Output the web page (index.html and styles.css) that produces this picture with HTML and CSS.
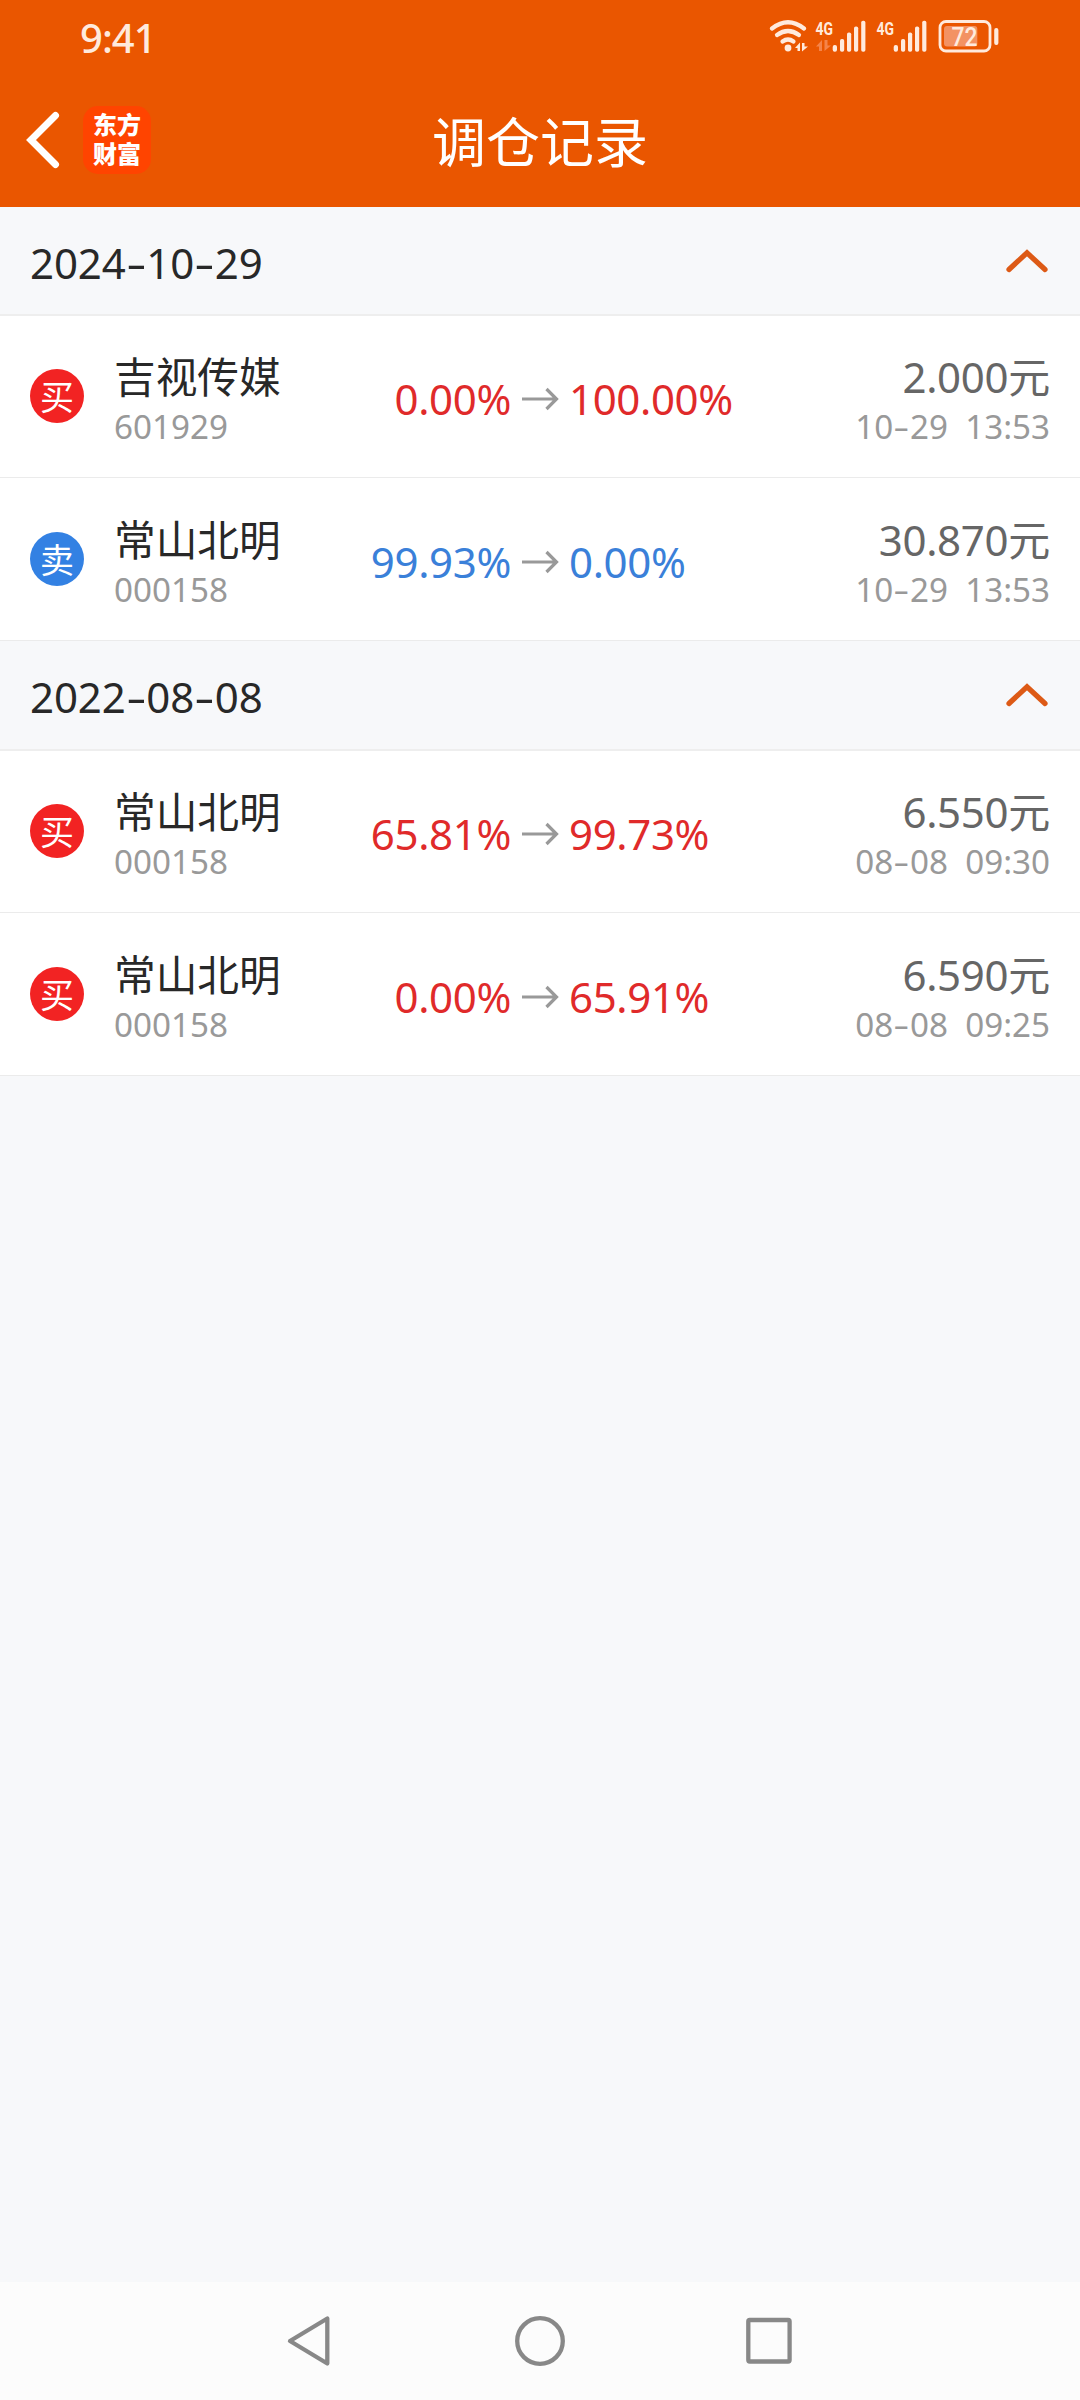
FILE: index.html
```html
<!DOCTYPE html>
<html lang="zh-CN">
<head>
<meta charset="utf-8">
<title>调仓记录</title>
<link rel="stylesheet" href="styles.css">
</head>
<body>
<svg class="defs" width="0" height="0" aria-hidden="true">
  <symbol id="arrow" viewBox="0 0 38 24"><path d="M1 12H35M25.500 2L35.500 12L25.500 22" fill="none" stroke="#999" stroke-width="3.200"/></symbol>
  <symbol id="chevron" viewBox="0 0 42 24"><path d="M3 20.500L21 3.800L39 20.500" fill="none" stroke="#dd5a16" stroke-width="5.200" stroke-linecap="round"/></symbol>
</svg>
<div class="screen">
  <header class="header">
    <div class="status">
      <span class="clock">9:41</span>
      <svg class="status-icons" width="240" height="40" viewBox="765 15 240 40">
        <g fill="none" stroke="#ffeadd" stroke-width="4.200" stroke-linecap="round">
          <path d="M772 28.500Q788 16 804 28.500"/>
          <path d="M777 35Q788 27 799 35"/>
          <path d="M782.500 41.500Q788 37.500 793.500 41.500"/>
        </g>
        <circle cx="788" cy="48" r="3.400" fill="#ffeadd"/>
        <path d="M795 48L800 42.500V51H797.500V48ZM802 43V51.500L808 46.500H804.500V43Z" fill="#ffeadd"/>
        <g fill="#ffeadd">
          <text class="net" x="815.500" y="35" textLength="17.500" lengthAdjust="spacingAndGlyphs">4G</text>
          <rect x="832.700" y="45" width="4.300" height="6.700" rx="2"/>
          <rect x="840" y="39" width="4.200" height="12.700" rx="1.800"/>
          <rect x="847" y="32.500" width="4.200" height="19.200" rx="1.800"/>
          <rect x="854" y="26.500" width="4.200" height="25.200" rx="1.800"/>
          <rect x="861.200" y="20.700" width="4.200" height="31" rx="1.800"/>
          <text class="net" x="876.500" y="35" textLength="17.500" lengthAdjust="spacingAndGlyphs">4G</text>
          <rect x="893.700" y="45" width="4.300" height="6.700" rx="2"/>
          <rect x="901" y="39" width="4.200" height="12.700" rx="1.800"/>
          <rect x="908" y="32.500" width="4.200" height="19.200" rx="1.800"/>
          <rect x="915" y="26.500" width="4.200" height="25.200" rx="1.800"/>
          <rect x="922.200" y="20.700" width="4.200" height="31" rx="1.800"/>
        </g>
        <path d="M816 46.500L822 40V51H819V46.500ZM824.500 40V51L831 45.500H827.500V40Z" fill="#f5844a"/>
        <rect x="940" y="21.500" width="50" height="29.500" rx="6" fill="none" stroke="#ffeadd" stroke-width="2.800"/>
        <rect x="944" y="26" width="33.300" height="20.500" rx="3" fill="#f39263"/>
        <rect x="994.200" y="28" width="4.200" height="17" rx="2" fill="#ffeadd"/>
        <text class="battery" x="951.500" y="46" textLength="26" lengthAdjust="spacingAndGlyphs">72</text>
      </svg>
    </div>
    <div class="titlebar">
      <div class="nav-left">
        <svg width="34" height="58" viewBox="0 0 34 58"><path d="M29.500 4.500L5 29L29.500 53.500" fill="none" stroke="#fff" stroke-width="7" stroke-linecap="round"/></svg>
        <div class="logo"><span>东方</span><span>财富</span></div>
      </div>
      <h1 class="title">调仓记录</h1>
    </div>
  </header>

  <main class="list">
    <section>
      <div class="date"><span>2024<i>-</i>10<i>-</i>29</span><svg width="42" height="24"><use href="#chevron"/></svg></div>
      <div class="row buy">
        <span class="badge">买</span>
        <div class="stock"><div class="name">吉视传媒</div><div class="code">601929</div></div>
        <span class="from">0.00%</span>
        <svg class="arrow" width="38" height="24"><use href="#arrow"/></svg>
        <span class="to">100.00%</span>
        <div class="deal"><div class="price">2.000元</div><div class="time">10<i>-</i>29&nbsp; 13:53</div></div>
      </div>
      <div class="row sell">
        <span class="badge">卖</span>
        <div class="stock"><div class="name">常山北明</div><div class="code">000158</div></div>
        <span class="from">99.93%</span>
        <svg class="arrow" width="38" height="24"><use href="#arrow"/></svg>
        <span class="to">0.00%</span>
        <div class="deal"><div class="price">30.870元</div><div class="time">10<i>-</i>29&nbsp; 13:53</div></div>
      </div>
    </section>
    <section>
      <div class="date"><span>2022<i>-</i>08<i>-</i>08</span><svg width="42" height="24"><use href="#chevron"/></svg></div>
      <div class="row buy">
        <span class="badge">买</span>
        <div class="stock"><div class="name">常山北明</div><div class="code">000158</div></div>
        <span class="from">65.81%</span>
        <svg class="arrow" width="38" height="24"><use href="#arrow"/></svg>
        <span class="to">99.73%</span>
        <div class="deal"><div class="price">6.550元</div><div class="time">08<i>-</i>08&nbsp; 09:30</div></div>
      </div>
      <div class="row buy">
        <span class="badge">买</span>
        <div class="stock"><div class="name">常山北明</div><div class="code">000158</div></div>
        <span class="from">0.00%</span>
        <svg class="arrow" width="38" height="24"><use href="#arrow"/></svg>
        <span class="to">65.91%</span>
        <div class="deal"><div class="price">6.590元</div><div class="time">08<i>-</i>08&nbsp; 09:25</div></div>
      </div>
    </section>
  </main>

  <nav class="sysnav">
    <svg width="52" height="52" viewBox="0 0 52 52"><path d="M42.300 3.500V48.500L5 26Z"/></svg>
    <svg width="52" height="52" viewBox="0 0 52 52"><circle cx="26" cy="26" r="22.800"/></svg>
    <svg width="52" height="52" viewBox="0 0 52 52"><rect x="5.300" y="5" width="41.300" height="41.500" rx="1.500"/></svg>
  </nav>
</div>
</body>
</html>
```
FILE: styles.css
```css
* { box-sizing: border-box; }
body {
  margin: 0;
  background: #f7f8fa;
  color: #282828;
  font-family: "Noto Sans", "Noto Sans CJK SC", sans-serif;
}
svg { display: block; }
.defs { position: absolute; }
.screen {
  display: flex;
  flex-direction: column;
  width: 1080px;
  height: 2400px;
}
i {
  display: inline-block;
  width: .505em;
  text-align: center;
  font-style: normal;
  transform: scaleX(1.5);
}

.header { height: 207px; background: #ea5600; color: #fff; }
.status {
  display: flex;
  justify-content: space-between;
  height: 75px;
  padding: 15px 75px 0 80px;
}
.clock {
  color: #ffeadd;
  font-size: 40px;
  font-weight: 500;
  letter-spacing: -1px;
  line-height: 46px;
}
.net { font: 700 19px "Roboto", sans-serif; }
.battery { font: 500 25px "Roboto", sans-serif; fill: #ffeadd; }
.titlebar {
  display: grid;
  grid-template-columns: 1fr auto 1fr;
  height: 132px;
  padding: 0 26px;
}
.nav-left { display: flex; align-items: center; gap: 23px; height: 129px; }
.logo {
  display: flex;
  flex-direction: column;
  align-items: center;
  width: 68px;
  height: 68px;
  border-radius: 15px;
  background: #ff4400;
  font: 900 24px/29px "Noto Sans CJK SC", sans-serif;
  padding-top: 3px;
}
.title {
  margin: 0;
  font-size: 54px;
  font-weight: 400;
  line-height: 135px;
}

.list { flex: 1; }
.date {
  display: flex;
  align-items: center;
  justify-content: space-between;
  height: 109px;
  padding: 0 32px 0 30px;
  border-bottom: 2px solid #eee;
  font-size: 42px;
  line-height: 107px;
}
.date span { padding-top: 3px; letter-spacing: -.1px; }
.date i { width: .49em; }
section + section .date { height: 110px; line-height: 108px; }
.row {
  display: grid;
  grid-template-columns: 84px 186px 211px 57px 190px 1fr;
  align-items: start;
  height: 162px;
  padding: 36px 30px 0;
  border-bottom: 1px solid #ebebeb;
  background: #fff;
  font-size: 42px;
  line-height: 50px;
  white-space: nowrap;
}
.row + .row { height: 163px; padding-top: 37px; }
.badge {
  width: 54px;
  height: 54px;
  margin-top: 17px;
  border-radius: 50%;
  color: #fff;
  font-size: 34px;
  line-height: 56px;
  text-align: center;
}
.buy .badge { background: #f22323; }
.sell .badge { background: #3381e3; }
.name { font-size: 41.700px; }
.code, .time { color: #999; font-size: 33.200px; line-height: 50px; }
.from, .to { margin-top: 22px; letter-spacing: -.35px; }
.from { text-align: right; }
.to { padding-left: 1px; }
.buy .from, .buy .to { color: #e02a2a; }
.sell .from, .sell .to { color: #3a80d9; }
.arrow { margin: 35px 0 0 10px; }
.deal { text-align: right; }
.price { color: #666; letter-spacing: -.3px; }

.sysnav {
  display: flex;
  justify-content: center;
  gap: 177px;
  height: 118px;
  padding-top: 33px;
  background: #fcfcfc;
}
.sysnav svg { fill: none; stroke: #888; stroke-width: 4.300; stroke-linejoin: round; }
```
